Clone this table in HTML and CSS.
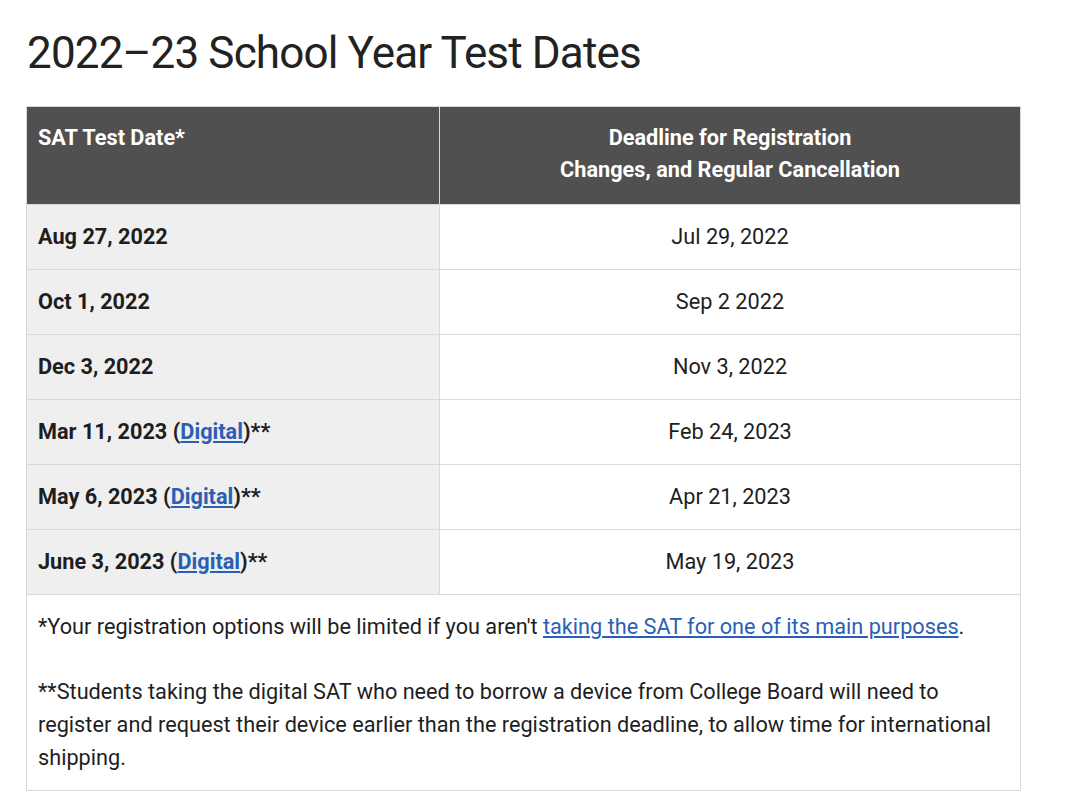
FILE: index.html
```html
<!DOCTYPE html>
<html lang="en">
<head>
<meta charset="utf-8">
<title>2022–23 School Year Test Dates</title>
<link rel="stylesheet" href="styles.css">
</head>
<body>
<main class="page">
  <h1 class="title">2022–23 School Year Test Dates</h1>
  <table class="dates">
    <thead>
      <tr>
        <th class="col-date">SAT Test Date*</th>
        <th class="col-deadline">Deadline for Registration<br>Changes, and Regular Cancellation</th>
      </tr>
    </thead>
    <tbody>
      <tr><td class="date">Aug 27, 2022</td><td class="deadline">Jul 29, 2022</td></tr>
      <tr><td class="date">Oct 1, 2022</td><td class="deadline">Sep 2 2022</td></tr>
      <tr><td class="date">Dec 3, 2022</td><td class="deadline">Nov 3, 2022</td></tr>
      <tr><td class="date">Mar 11, 2023 (<a href="#" class="link">Digital</a>)**</td><td class="deadline">Feb 24, 2023</td></tr>
      <tr><td class="date">May 6, 2023 (<a href="#" class="link">Digital</a>)**</td><td class="deadline">Apr 21, 2023</td></tr>
      <tr><td class="date">June 3, 2023 (<a href="#" class="link">Digital</a>)**</td><td class="deadline">May 19, 2023</td></tr>
      <tr>
        <td class="notes" colspan="2">
          <p class="note">*Your registration options will be limited if you aren't <a href="#" class="link-plain">taking the SAT for one of its main purposes</a>.</p>
          <p class="note">**Students taking the digital SAT who need to borrow a device from College Board will need to register and request their device earlier than the registration deadline, to allow time for international shipping.</p>
        </td>
      </tr>
    </tbody>
  </table>
</main>
</body>
</html>
```

FILE: styles.css
```css
html, body {
  margin: 0;
  padding: 0;
  background: #ffffff;
}

.page {
  font-family: Roboto, "Liberation Sans", Arial, sans-serif;
  color: #1e1e1e;
  padding: 28px 59px 0 26px;
}

.title {
  font-family: Roboto, "Liberation Sans", Arial, sans-serif;
  font-weight: 400;
  font-size: 44px;
  line-height: 50px;
  color: #222222;
  margin: 0 0 28px 1px;
  letter-spacing: -0.85px;
}

.dates {
  width: 995px;
  border-collapse: collapse;
  font-size: 21.7px;
  line-height: 32px;
  border: 1px solid #d9d9d9;
}

.dates th {
  background: #505050;
  color: #ffffff;
  font-weight: 700;
  vertical-align: top;
  padding: 15px 11px 18px;
  border: 1px solid #d9d9d9;
}

.col-date {
  width: 390px;
  text-align: left;
}

.col-deadline {
  text-align: center;
}

.dates td {
  border: 1px solid #d9d9d9;
  padding: 16px 11px;
}

.date {
  background: #efefef;
  font-weight: 700;
  color: #1e1e1e;
}

.deadline {
  text-align: center;
  color: #1e1e1e;
}

.link {
  color: #2b5fb4;
  text-decoration: underline;
}

.dates td.notes {
  padding: 15px 11px 16px;
  line-height: 33px;
  background: #ffffff;
}

.note {
  margin: 0;
}

.note + .note {
  margin-top: 32px;
}

.link-plain {
  color: #2b5fb4;
  text-decoration: underline;
}
```
